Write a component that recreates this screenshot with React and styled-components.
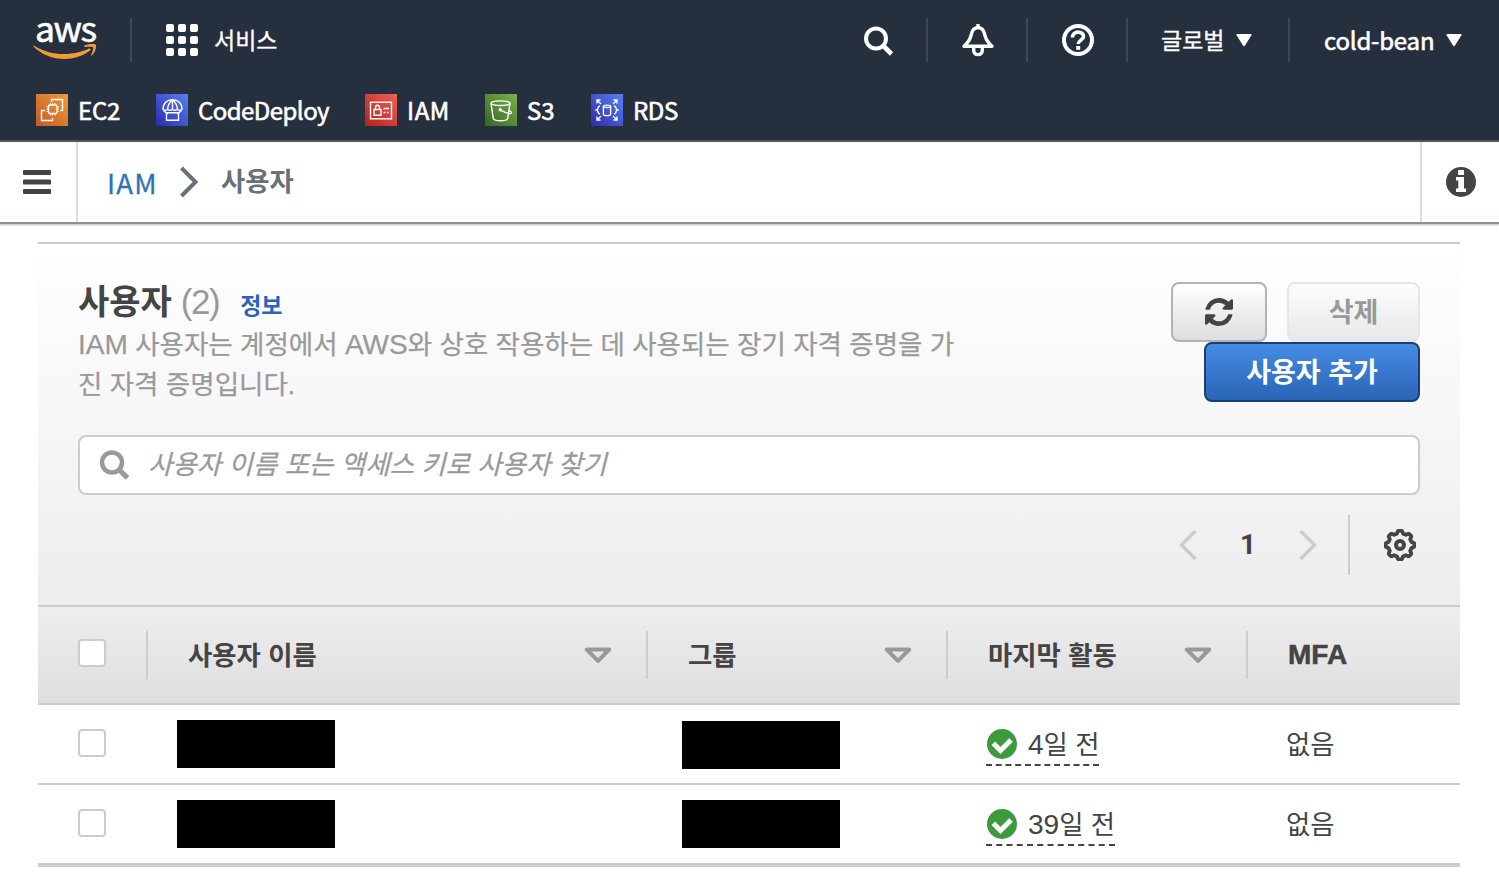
import React from "react";
import styled, { createGlobalStyle } from "styled-components";

const GlobalStyle = createGlobalStyle`
  * {
    box-sizing: border-box;
  }

  body {
    margin: 0;
    background: #fff;
    color: #444;
    font-family: "Liberation Sans", "Noto Sans CJK KR", sans-serif;
    font-size: 26.4px;
  }

  svg {
    display: block;
    flex: none;
  }
`;

const Header = styled.header`
  height: 142px;
  background: #262f3e;
  border-bottom: 2px solid #545863;
  color: #fff;
  font-family: "Noto Sans CJK KR", sans-serif;
  font-size: 24px;
`;

const TopBar = styled.div`
  display: flex;
  align-items: center;
  height: 80px;
`;

const Spacer = styled.div`
  flex: 1;
`;

const NavItem = styled.div`
  display: flex;
  align-items: center;
  justify-content: ${(p) => (p.$start ? "flex-start" : "center")};
  gap: ${(p) => p.$gap || 12}px;
  width: ${(p) => p.$width}px;
  height: 44px;
  padding-left: ${(p) => p.$pad || 0}px;
  border-left: ${(p) => (p.$plain ? "none" : "2px solid #414750")};
  white-space: nowrap;
`;

const NavText = styled.span`
  padding-bottom: ${(p) => p.$lift || 0}px;
  line-height: 32px;
  font-size: ${(p) => p.$size || 24}px;
  letter-spacing: ${(p) => p.$spacing || 0}px;
  -webkit-text-stroke: ${(p) => p.$stroke || 0.6}px #fff;
`;

const Logo = styled.div`
  display: flex;
  flex-direction: column;
  width: 130px;
  height: 44px;
  padding-left: 33px;
`;

const LogoText = styled.span`
  height: 25px;
  padding-left: 2px;
  font-size: 35.5px;
  line-height: 17px;
  letter-spacing: -1.5px;
  -webkit-text-stroke: 0.6px #fff;
`;

const Shortcuts = styled.nav`
  display: flex;
  align-items: center;
  height: 60px;
  padding-left: 36px;
`;

const Shortcut = styled.div`
  display: flex;
  align-items: center;
  gap: 10px;
  width: ${(p) => p.$width}px;
`;

const ServiceIcon = styled.div`
  width: 32px;
  height: 32px;
  background: linear-gradient(45deg, ${(p) => p.$from}, ${(p) => p.$to});
`;

const BreadcrumbBar = styled.div`
  display: flex;
  align-items: center;
  height: 82px;
  border-bottom: 2px solid #879196;
  box-shadow: 0 1px 2px rgba(0, 28, 36, 0.3);
`;

const MenuCell = styled.div`
  display: flex;
  align-items: center;
  justify-content: center;
  width: 78px;
  height: 80px;
  padding-right: 2px;
  border-right: 2px solid #ddd;
`;

const InfoCell = styled.div`
  display: flex;
  align-items: center;
  justify-content: center;
  width: 79px;
  height: 80px;
  border-left: 2px solid #ddd;
`;

const Crumbs = styled.div`
  display: flex;
  align-items: center;
  flex: 1;
  padding-left: 29px;
`;

const CrumbLink = styled.a`
  width: 72px;
  padding-bottom: 1px;
  color: #2a73b9;
  font-family: "Noto Sans CJK KR", sans-serif;
  font-size: 27.5px;
  line-height: 38px;
  letter-spacing: 1.2px;
  -webkit-text-stroke: 0.3px #2a73b9;
`;

const CrumbCurrent = styled.span`
  margin-left: 22px;
  color: #687078;
  font-weight: 700;
  line-height: 40px;
`;

const Panel = styled.main`
  margin: 18px 39px 0 38px;
  border-top: 2px solid #ccc;
`;

const Toolbar = styled.section`
  height: 361px;
  padding: 38px 40px 0;
  background: linear-gradient(#fff, #ededed);
`;

const TitleRow = styled.div`
  display: flex;
  justify-content: space-between;
  height: 153px;
`;

const TitleBlock = styled.div`
  width: 900px;
`;

const Title = styled.h1`
  display: flex;
  align-items: baseline;
  height: 40px;
  margin: 0;
  font-size: 34px;
  line-height: 40px;
`;

const Count = styled.span`
  margin-left: 9px;
  color: #999;
  font-size: 35px;
  font-weight: 400;
  letter-spacing: -1.5px;
`;

const InfoLink = styled.a`
  margin-left: 21px;
  color: #2a64b6;
  font-size: 23px;
`;

const Description = styled.p`
  margin: 3px 0 0;
  color: #999;
  font-size: 26.5px;
  line-height: 40px;
  white-space: nowrap;
  -webkit-text-stroke: 0.25px #999;
`;

const Latin = styled.span`
  font-size: 28px;
`;

const Actions = styled.div`
  display: flex;
  flex-wrap: wrap;
  justify-content: flex-end;
  align-content: flex-start;
  column-gap: 20px;
  width: 260px;
`;

const Button = styled.button`
  display: flex;
  align-items: center;
  justify-content: center;
  width: ${(p) => p.$width}px;
  height: 60px;
  padding: 0 0 ${(p) => (p.$icon ? 0 : 3)}px;
  border: 2px solid ${(p) => (p.$primary ? "#1c3f73" : "#b3b3b3")};
  border-radius: 8px;
  background: ${(p) =>
    p.$primary
      ? "linear-gradient(#468ce4, #2a64b6)"
      : "linear-gradient(#fff, #dedede)"};
  color: ${(p) => (p.$primary ? "#fff" : "#444")};
  font-family: inherit;
  font-size: 27px;
  font-weight: 700;

  &:disabled {
    border-color: #e6e6e6;
    background: linear-gradient(#fdfdfd, #e8e8e8);
    color: #999;
  }
`;

const SearchBox = styled.div`
  display: flex;
  align-items: center;
  gap: 17px;
  height: 60px;
  padding-left: 19px;
  border: 2px solid #ccc;
  border-radius: 8px;
  background: #fff;
`;

const SearchInput = styled.input`
  flex: 1;
  height: 50px;
  padding: 0;
  border: 0;
  outline: 0;
  background: none;
  font-family: inherit;
  font-size: 26.5px;
  font-style: italic;

  &::placeholder {
    color: #999;
    opacity: 1;
    -webkit-text-stroke: 0.25px #999;
  }
`;

const Pager = styled.div`
  display: flex;
  align-items: center;
  justify-content: flex-end;
  height: 60px;
  margin-top: 20px;
`;

const PageNumber = styled.span`
  width: 100px;
  text-align: center;
  font-family: Roboto, sans-serif;
  font-size: 28px;
  line-height: 38px;
  font-weight: 700;
`;

const PagerSettings = styled.div`
  display: flex;
  align-items: center;
  justify-content: flex-end;
  width: 72px;
  height: 60px;
  margin-left: 30px;
  padding-right: 4px;
  border-left: 2px solid #ccc;
`;

const Row = styled.div`
  display: grid;
  grid-template-columns: 110px 500px 300px 300px 1fr;
  align-items: center;
  height: ${(p) => (p.$last ? 82 : 80)}px;
  border-bottom: ${(p) => (p.$last ? 4 : 2)}px solid #ccc;
`;

const HeadRow = styled(Row)`
  height: 100px;
  border-top: 2px solid #ccc;
  background: linear-gradient(#eee, #dedede);
  font-weight: 700;
`;

const HeadCell = styled.div`
  display: flex;
  align-items: center;
  justify-content: space-between;
  height: 48px;
  padding: 0 34px 0 40px;
  border-right: ${(p) => (p.$last ? 0 : 2)}px solid #ccc;
`;

const HeadLabel = styled.span`
  padding-bottom: 4px;
`;

const HeadLatin = styled.span`
  font-size: 28px;
  -webkit-text-stroke: 0.5px #444;
`;

const Cell = styled.div`
  display: flex;
  align-items: center;
  padding-left: ${(p) => p.$pad}px;
  padding-bottom: ${(p) => p.$lift || 0}px;
`;

const Checkbox = styled.input`
  appearance: none;
  width: 28px;
  height: 28px;
  margin: 0 0 ${(p) => (p.$head ? 4 : 2)}px;
  border: 2px solid #ccc;
  border-radius: 4px;
  background: #fff;
`;

const Redacted = styled.div`
  width: 158px;
  height: 48px;
  margin-top: ${(p) => p.$shift || 0}px;
  background: #000;
`;

const Activity = styled.span`
  display: flex;
  align-items: center;
  gap: 11px;
  height: 43px;
  padding-left: 1px;
  border-bottom: 2px dashed #444;
  white-space: nowrap;
`;

const ActivityText = styled.span`
  padding-bottom: 2px;
`;

const GridIcon = () => (
  <svg width="32" height="32" fill="#fff">
    {[0, 12, 24].map((y) =>
      [0, 12, 24].map((x) => (
        <rect key={`${x}-${y}`} x={x} y={y} width="8" height="8" rx="2" />
      ))
    )}
  </svg>
);

const Smile = () => (
  <svg width="64" height="18" viewBox="0 0 64 18" fill="#f19b38">
    <path d="M1.2 2.700C10 8.100 20 11.100 31 11.100c9 0 18-2.200 25-5.500 1.300-.6 2.400.8 1.200 1.800C50.500 12.600 40.500 15.900 31.200 15.900 19.500 15.900 9 11.500.9 3.900.2 3.200.5 2.300 1.200 2.700Z" />
    <path d="M51.200 2.800c3.200-2.300 11-2.300 11.700-1.100.7 1.300-.4 7.700-3.800 10.600-.6.500-1.200.2-.9-.5.900-2.200 2.600-6.300 1.800-7.400-.8-1-5.400-.7-7.800-.4-.8.100-1.200-.6-1-1.200Z" />
  </svg>
);

const SearchIcon = ({ color, width = 4 }) => (
  <svg width="32" height="32" fill="none" stroke={color} strokeWidth={width}>
    <circle cx="13" cy="13.500" r="10" />
    <path d="m20 20.500 8.500 8.500" strokeWidth={width + 0.6} />
  </svg>
);

const HeaderSearch = styled.div`
  padding: 1px 0 0 2px;
`;

const BellIcon = () => (
  <svg width="34" height="34" fill="none" stroke="#fff" strokeWidth="3.400">
    <path
      strokeLinejoin="round"
      d="M4 23.300h28c-4-3.600-5.700-6-6.800-10-.9-5.300-3-8.800-7.200-8.800s-6.300 3.500-7.200 8.800c-1.100 4-2.800 6.400-6.800 10Z"
    />
    <path d="M18 1V5M13.700 24v3.500c0 5.500 8.600 5.500 8.600 0V24" />
  </svg>
);

const HelpIcon = () => (
  <svg width="34" height="34" fill="none" stroke="#fff" strokeWidth="4">
    <circle cx="18" cy="17" r="14" />
    <path
      strokeWidth="3.600"
      d="M12.500 14.600c0-3.600 2.400-5.500 5.500-5.500 3.200 0 5.500 1.700 5.500 4.400 0 3.400-5.300 3.800-5.300 7.500"
    />
    <path d="M18.200 23v3.800" />
  </svg>
);

const Caret = () => (
  <svg width="16" height="14" fill="#fff">
    <path d="M1.300 1h13.400q1.300 0 .7 1.200L9 12.600q-1 1.300-2 0L.6 2.200Q0 1 1.300 1Z" />
  </svg>
);

const MenuIcon = () => (
  <svg width="28" height="24" fill="#444">
    <rect width="28" height="5" rx="1" />
    <rect y="9.500" width="28" height="5" rx="1" />
    <rect y="19" width="28" height="5" rx="1" />
  </svg>
);

const InfoIcon = () => (
  <svg width="30" height="30">
    <circle cx="15" cy="15" r="15" fill="#444" />
    <path
      d="M12 3h6v5h-6zM10 10h8v11.500h2V25H10v-3.500h2.300v-8H10z"
      fill="#fff"
    />
  </svg>
);

const Chevron = ({ color, left, width = 3.5 }) => (
  <svg width="20" height="32" fill="none" stroke={color} strokeWidth={width}>
    <path d={left ? "M17.500 2 3.500 16l14 14" : "m2.500 2 14 14-14 14"} />
  </svg>
);

const RefreshIcon = () => (
  <svg width="28" height="28" viewBox="0 0 1536 1536" fill="#444">
    <path d="M1511 928q0 5-1 7-64 268-268 434.500T764 1536q-146 0-282.500-55T238 1324l-129 129q-19 19-45 19t-45-19-19-45V960q0-26 19-45t45-19h448q26 0 45 19t19 45-19 45l-137 137q71 66 161 102t187 36q134 0 250-65t186-179q11-17 53-117 8-23 30-23h192q13 0 22.500 9.500t9.500 22.500zm25-800v448q0 26-19 45t-45 19h-448q-26 0-45-19t-19-45 19-45l138-138Q969 256 768 256q-134 0-250 65T332 500q-11 17-53 117-8 23-30 23H50q-13 0-22.500-9.500T18 608v-7q65-268 270-434.500T768 0q146 0 284 55.500T1297 212l130-129q19-19 45-19t45 19 19 45z" />
  </svg>
);

// cog outline: eight shallow teeth around the circle
const gearPath = () => {
  const points = [];
  for (let i = 0; i < 160; i += 1) {
    const a = (i / 160) * Math.PI * 2;
    const wave = Math.max(-1, Math.min(1, Math.cos(a * 8) * 2));
    const r = 13 + 1.3 * wave;
    points.push(
      `${(16 + r * Math.cos(a)).toFixed(2)} ${(16 + r * Math.sin(a)).toFixed(2)}`
    );
  }
  return `M${points.join("L")}Z`;
};

const GearIcon = () => (
  <svg width="32" height="32" fill="none" stroke="#444">
    <path d={gearPath()} strokeWidth="3.800" strokeLinejoin="round" />
    <circle cx="16" cy="16" r="4" strokeWidth="4" />
  </svg>
);

const SortIcon = () => (
  <svg width="28" height="17" fill="none" stroke="#999" strokeWidth="4">
    <path d="M2.800 2.500h22.400L14 13.800Z" strokeLinejoin="round" />
  </svg>
);

const CheckIcon = () => (
  <svg width="30" height="32">
    <circle cx="15" cy="17" r="15" fill="#3f9a3f" />
    <path
      d="m6.300 16.300 7.200 7.200L24 13"
      fill="none"
      stroke="#fff"
      strokeWidth="5"
    />
  </svg>
);

const Glyph = ({ children }) => (
  <svg width="32" height="32" fill="none" stroke="#fff" strokeWidth="1.400">
    {children}
  </svg>
);

const services = [
  {
    name: "EC2",
    width: 120,
    from: "#c35a25",
    to: "#f39b39",
    spacing: -0.2,
    glyph: (
      <Glyph>
        <path d="M9 16.500H5.500v10h11V24M15.500 8V5.500h11v11H24.500" />
        <rect x="12.500" y="11" width="8.500" height="8.500" rx="1.500" />
        <path
          d="M14.500 9v1.500m2.200-1.500v1.500M19 9v1.500M14.500 20v1.500m2.200-1.500v1.500M19 20v1.500M10.500 13H12m-1.500 2.200H12m-1.500 2.300H12M21.500 13H23m-1.500 2.200H23m-1.500 2.300H23"
          strokeWidth="1"
        />
      </Glyph>
    ),
  },
  {
    name: "CodeDeploy",
    width: 209,
    from: "#2e2ba8",
    to: "#5381f7",
    spacing: -0.55,
    glyph: (
      <Glyph>
        <path d="M7 15.500C7 9.500 11 5.700 16.500 5.700s9.500 3.800 9.500 9.800q-2.400 1.600-4.700 0-2.400 1.600-4.800 0-2.400 1.600-4.800 0-2.400 1.600-4.700 0ZM11.700 15.500q0-6 4.800-9.800 4.800 3.800 4.800 9.800M16.500 5.700v9.800M7.500 16.500l4 3.500m14-3.500-4 3.500" />
        <path d="M10.500 18.700h12v7.600h-12z" />
      </Glyph>
    ),
  },
  {
    name: "IAM",
    width: 120,
    from: "#b3211f",
    to: "#ee6058",
    spacing: 0.6,
    glyph: (
      <Glyph>
        <rect x="5.500" y="8.300" width="21" height="16.500" />
        <path d="M9 15.500h7v5.700H9zM10.500 15.500v-2c0-3 4-3 4 0v2M18.500 14.500h5.500M18.500 18.500h2M22 18.500h1.500" />
      </Glyph>
    ),
  },
  {
    name: "S3",
    width: 106,
    from: "#326824",
    to: "#7cb04c",
    glyph: (
      <Glyph>
        <ellipse cx="15.500" cy="9.200" rx="9.500" ry="2.300" />
        <path d="m6 9.500 2.300 15q1 2.300 7.200 2.300t7.200-2.300l2.300-15M15 15.800q11 5.700 11.500 2.800 0-1.300-3-2.500" />
        <circle cx="15.300" cy="15.800" r="1.100" />
      </Glyph>
    ),
  },
  {
    name: "RDS",
    width: 120,
    from: "#2e2ba8",
    to: "#5381f7",
    spacing: -0.4,
    glyph: (
      <Glyph>
        <path d="m6 6 4 4m16-4-4 4M6 26l4-4m16 4-4-4M6 9.500V6h3.500m13 0H26v3.500M6 22.500V26h3.500m13 0H26v-3.500" />
        <ellipse cx="16" cy="12.300" rx="3.600" ry="1.200" />
        <path d="M12.400 12.300v8c0 1.800 7.200 1.800 7.200 0v-8M9 12q-2 .5-2 2T5.500 16q1.500.5 1.500 2t2 2M23 12q2 .5 2 2t1.500 2q-1.500.5-1.500 2t-2 2" />
      </Glyph>
    ),
  },
];

const columns = ["사용자 이름", "그룹", "마지막 활동"];

const users = [
  { days: "4", shift: 2 },
  { days: "39", shift: 0 },
];

export default function App() {
  return (
    <>
      <GlobalStyle />
      <Header>
        <TopBar>
          <Logo>
            <LogoText>aws</LogoText>
            <Smile />
          </Logo>
          <NavItem $start $pad={34} $gap={16} $width={200}>
            <GridIcon />
            <NavText $size={23} $stroke={0.3} $lift={3}>
              서비스
            </NavText>
          </NavItem>
          <Spacer />
          <NavItem $plain $width={96}>
            <HeaderSearch>
              <SearchIcon color="#fff" />
            </HeaderSearch>
          </NavItem>
          <NavItem $width={100}>
            <BellIcon />
          </NavItem>
          <NavItem $width={100}>
            <HelpIcon />
          </NavItem>
          <NavItem $start $pad={33} $width={162}>
            <NavText $size={23} $stroke={0.3} $lift={3}>
              글로벌
            </NavText>
            <Caret />
          </NavItem>
          <NavItem $start $pad={34} $width={211}>
            <NavText $spacing={-0.2}>cold-bean</NavText>
            <Caret />
          </NavItem>
        </TopBar>
        <Shortcuts>
          {services.map((s) => (
            <Shortcut key={s.name} $width={s.width}>
              <ServiceIcon $from={s.from} $to={s.to}>
                {s.glyph}
              </ServiceIcon>
              <NavText $spacing={s.spacing} $lift={1}>
                {s.name}
              </NavText>
            </Shortcut>
          ))}
        </Shortcuts>
      </Header>

      <BreadcrumbBar>
        <MenuCell>
          <MenuIcon />
        </MenuCell>
        <Crumbs>
          <CrumbLink>IAM</CrumbLink>
          <Chevron color="#687078" width={4} />
          <CrumbCurrent>사용자</CrumbCurrent>
        </Crumbs>
        <InfoCell>
          <InfoIcon />
        </InfoCell>
      </BreadcrumbBar>

      <Panel>
        <Toolbar>
          <TitleRow>
            <TitleBlock>
              <Title>
                사용자<Count>(2)</Count>
                <InfoLink>정보</InfoLink>
              </Title>
              <Description>
                <Latin>IAM</Latin> 사용자는 계정에서 <Latin>AWS</Latin>와 상호
                작용하는 데 사용되는 장기 자격 증명을 가
                <br />진 자격 증명입니다.
              </Description>
            </TitleBlock>
            <Actions>
              <Button $width={96} $icon>
                <RefreshIcon />
              </Button>
              <Button $width={133} disabled>
                삭제
              </Button>
              <Button $width={216} $primary>
                사용자 추가
              </Button>
            </Actions>
          </TitleRow>
          <SearchBox>
            <SearchIcon color="#999" width={4.5} />
            <SearchInput placeholder="사용자 이름 또는 액세스 키로 사용자 찾기" />
          </SearchBox>
          <Pager>
            <Chevron color="#ccc" left />
            <PageNumber>1</PageNumber>
            <Chevron color="#ccc" />
            <PagerSettings>
              <GearIcon />
            </PagerSettings>
          </Pager>
        </Toolbar>

        <HeadRow>
          <HeadCell>
            <Checkbox type="checkbox" $head />
          </HeadCell>
          {columns.map((name) => (
            <HeadCell key={name}>
              <HeadLabel>{name}</HeadLabel>
              <SortIcon />
            </HeadCell>
          ))}
          <HeadCell $last>
            <HeadLatin>MFA</HeadLatin>
          </HeadCell>
        </HeadRow>
        {users.map((user, i) => (
          <Row key={user.days} $last={i === users.length - 1}>
            <Cell $pad={40}>
              <Checkbox type="checkbox" />
            </Cell>
            <Cell $pad={29}>
              <Redacted />
            </Cell>
            <Cell $pad={34}>
              <Redacted $shift={user.shift} />
            </Cell>
            <Cell $pad={38}>
              <Activity>
                <CheckIcon />
                <ActivityText>
                  <Latin>{user.days}</Latin>일 전
                </ActivityText>
              </Activity>
            </Cell>
            <Cell $pad={38} $lift={4}>
              없음
            </Cell>
          </Row>
        ))}
      </Panel>
    </>
  );
}
